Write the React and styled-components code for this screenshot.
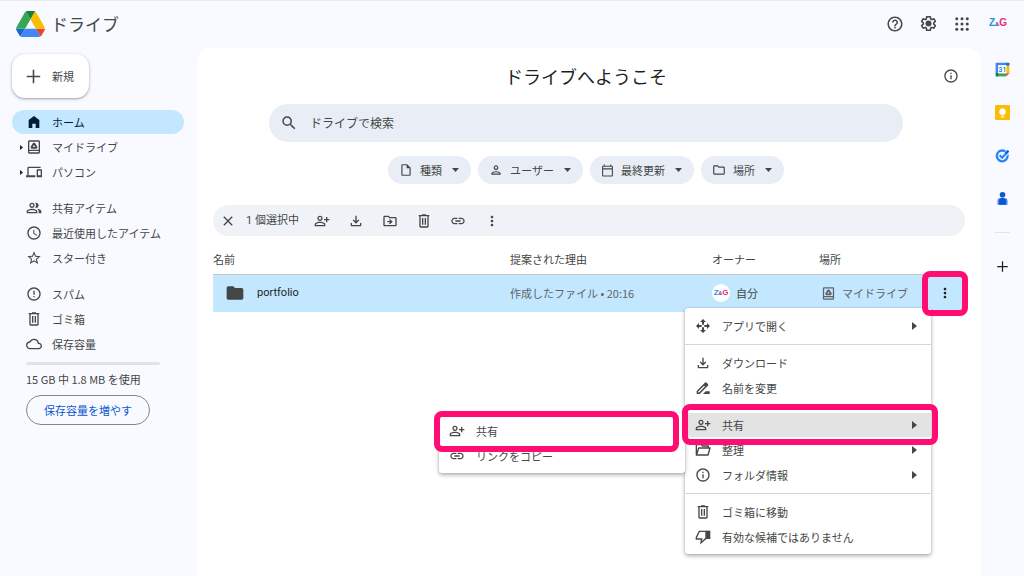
import styled, { createGlobalStyle } from "styled-components";
import {
    MdAdd,
    MdClose,
    MdErrorOutline,
    MdHelpOutline,
    MdLink,
    MdMoreVert,
    MdOutlineCalendarToday,
    MdOutlineCloud,
    MdOutlineDevices,
    MdOutlineDriveFileMove,
    MdOutlineFileDownload,
    MdOutlineFolder,
    MdOutlineInfo,
    MdOutlineInsertDriveFile,
    MdOutlinePeopleAlt,
    MdOutlinePersonAddAlt,
    MdOutlinePerson,
    MdFolder,
    MdSchedule,
    MdSearch,
    MdStarOutline,
} from "react-icons/md";

const GlobalStyle = createGlobalStyle`
    * {
        box-sizing: border-box;
    }

    body {
        margin: 0;
        background-color: #f9faff;
        color: #444746;
        font-family: "Noto Sans CJK JP", sans-serif;
        font-size: 11px;
        line-height: 16px;
    }

    button, input {
        margin: 0;
        padding: 0;
        border: none;
        background: none;
        color: inherit;
        font: inherit;
    }

    svg {
        display: block;
        flex-shrink: 0;
    }

    ul {
        margin: 0;
        padding: 0;
        list-style: none;
    }
`;

const Page = styled.div`
    display: grid;
    grid-template-columns: 197px minmax(0, 1fr) 43px;
    grid-template-rows: 47px 1fr;
    min-height: 100vh;
    border-top: 1px solid #e9ecf1;
`;

const Header = styled.header`
    grid-column: 1 / -1;
    display: flex;
    align-items: center;
    justify-content: space-between;
    padding: 0 16px 2px;
`;

const Brand = styled.a`
    display: flex;
    align-items: center;
    gap: 6px;
    color: #444746;
    font-size: 17px;
    line-height: 24px;
    text-decoration: none;
`;

const HeaderActions = styled.div`
    display: flex;
    align-items: center;
    gap: 15px;
`;

const IconButton = styled.button`
    display: flex;
    align-items: center;
    justify-content: center;
    color: ${props => props.$color || "#444746"};
`;

const ProfileButton = styled(IconButton)`
    width: 20px;
    margin-left: 2px;
`;

const Initials = styled.span`
    color: #1b96d8;
    font-family: "Liberation Sans", Arial, sans-serif;
    font-size: ${props => (props.$small ? 8 : 10)}px;
    font-weight: 700;
    line-height: 12px;

    em {
        color: #7a3f98;
        font-size: ${props => (props.$small ? 5 : 6)}px;
        font-style: normal;
    }

    strong {
        color: #ed2a7b;
    }
`;

const Sidebar = styled.aside`
    padding: 6px 13px 16px 12px;
`;

const NewButton = styled.button`
    display: flex;
    align-items: center;
    gap: 9px;
    width: 77px;
    height: 44px;
    padding-left: 12px;
    border-radius: 13px;
    background-color: white;
    box-shadow: 0 1px 2px rgba(60, 64, 67, 0.35), 0 1px 3px 1px rgba(60, 64, 67, 0.12);
`;

const Nav = styled.nav`
    display: flex;
    flex-direction: column;
    gap: 12px;
    margin-top: 12px;
`;

const NavGroup = styled.ul`
    display: flex;
    flex-direction: column;
    gap: 1px;
`;

const NavLink = styled.a`
    display: grid;
    grid-template-columns: 8px 16px 1fr;
    align-items: center;
    height: 24px;
    padding-left: 6px;
    border-radius: 12px;
    background-color: ${props => (props.$active ? "#c2e7ff" : "transparent")};
    color: ${props => (props.$active ? "#001d35" : "#444746")};
    text-decoration: none;
`;

const NavLabel = styled.span`
    padding-left: 10px;
`;

const Storage = styled.section`
    padding: 6px 24px 0 14px;
`;

const StorageBar = styled.div`
    height: 3px;
    border-radius: 2px;
    background-color: #e1e3e1;
`;

const StorageText = styled.p`
    margin: 6px 0 8px;
`;

const StorageButton = styled.button`
    height: 30px;
    padding: 0 17px;
    border: 1px solid #80868b;
    border-radius: 15px;
    color: #0b57d0;
`;

const Main = styled.main`
    padding: 16px 16px 0;
    border-radius: 14px 14px 0 0;
    background-color: white;
`;

const Hero = styled.section`
    padding-right: 6px;
`;

const TitleRow = styled.div`
    display: grid;
    grid-template-columns: 1fr auto 1fr;
    align-items: center;
`;

const Title = styled.h1`
    grid-column: 2;
    margin: 0;
    color: #1f1f1f;
    font-size: 18px;
    font-weight: 400;
    line-height: 24px;
`;

const InfoButton = styled(IconButton)`
    justify-self: end;
`;

const SearchBox = styled.label`
    display: flex;
    align-items: center;
    gap: 12px;
    width: 85%;
    height: 38px;
    margin: 16px auto 14px;
    padding: 0 11px;
    border-radius: 19px;
    background-color: #e8edf6;
`;

const SearchInput = styled.input`
    flex-grow: 1;
    font-size: 12px;
    line-height: 20px;
    outline: none;

    &::placeholder {
        color: #444746;
        opacity: 1;
    }
`;

const Chips = styled.div`
    display: flex;
    justify-content: center;
    gap: 7px;
`;

const Chip = styled.button`
    display: flex;
    align-items: center;
    gap: 7px;
    height: 28px;
    padding: 0 12px 0 11px;
    border-radius: 14px;
    background-color: #e8edf6;

    span {
        margin-right: 3px;
    }
`;

const SelectionBar = styled.div`
    display: flex;
    align-items: center;
    gap: 10px;
    height: 31px;
    margin: 21px 0 15px;
    padding-left: 7px;
    border-radius: 16px;
    background-color: #eff3f8;
`;

const SelectionCount = styled.span`
    font-family: Roboto, "Noto Sans CJK JP", sans-serif;
`;

const SelectionActions = styled.div`
    display: flex;
    gap: 18px;
    margin-left: 5px;
`;

const FileTable = styled.table`
    width: 100%;
    border-collapse: collapse;
    table-layout: fixed;
`;

const HeadCell = styled.th`
    width: ${props => props.$width || "auto"};
    height: 23px;
    padding: 0 0 7px;
    border-bottom: 1px solid #c7c7c7;
    font-weight: 400;
    text-align: left;
`;

const Cell = styled.td`
    position: relative;
    height: 37px;
    padding: 0;
    background-color: #c2e7ff;
    color: ${props => (props.$muted ? "#5f6368" : "inherit")};
`;

const CellContent = styled.div`
    display: flex;
    align-items: center;
    gap: ${props => props.$gap || 0}px;
    padding-left: ${props => props.$inset || 0}px;
`;

const FileName = styled.span`
    color: #1f1f1f;
    font-family: Roboto, "Noto Sans CJK JP", sans-serif;
    font-size: 11px;
`;

const Avatar = styled.span`
    display: flex;
    align-items: center;
    justify-content: center;
    width: 18px;
    height: 18px;
    border-radius: 50%;
    background-color: white;
`;

const RowMenuButton = styled(IconButton)`
    width: 100%;
    height: 36px;
`;

const MenuPanel = styled.div`
    position: absolute;
    z-index: ${props => (props.$nested ? 1 : 2)};
    top: ${props => (props.$nested ? "-6px" : "33px")};
    right: ${props => (props.$nested ? "100%" : "34px")};
    width: 246px;
    border-radius: 3px;
    background-color: white;
    box-shadow: 0 2px 4px rgba(0, 0, 0, 0.3), 0 0 2px rgba(0, 0, 0, 0.15);
`;

const SubmenuAnchor = styled.div`
    position: absolute;
    top: 6px;
    left: 0;
`;

const MenuGroup = styled.ul`
    display: flex;
    flex-direction: column;
    gap: 1px;
    padding: 6px 0;

    & + & {
        border-top: 1px solid #d5d6d8;
    }

    &:last-child {
        padding-bottom: 5px;
    }
`;

const MenuRow = styled.li`
    position: relative;
`;

const MenuButton = styled.button`
    display: flex;
    align-items: center;
    gap: 11px;
    width: 100%;
    height: 24px;
    padding: 0 14px 0 10px;
    background-color: ${props => (props.$active ? "#e3e3e3" : "transparent")};
    text-align: left;

    span {
        flex-grow: 1;
    }
`;

const Callout = styled.div`
    position: absolute;
    z-index: 3;
    inset: ${props => props.$inset};
    border: 6px solid #ff0d72;
    border-radius: 8px;
    pointer-events: none;
`;

const Rail = styled.aside`
    display: flex;
    flex-direction: column;
    align-items: center;
    gap: 26px;
    padding-top: 14px;
`;

const RailApps = styled.div`
    display: flex;
    flex-direction: column;
    gap: 28px;
`;

const RailDivider = styled.hr`
    width: 15px;
    height: 1px;
    margin: 0;
    border: none;
    background-color: #e1e4e8;
`;

const Icon = ({ size = 16, children }) => (
    <svg width={size} height={size} viewBox="0 0 24 24" fill="currentColor" aria-hidden="true">
        {children}
    </svg>
);

const DriveLogo = () => (
    <svg width="29" height="26" viewBox="0 0 87.3 78" aria-hidden="true">
        <path fill="#1967d2" d="m6.6 66.85 3.85 6.65c.8 1.4 1.95 2.5 3.3 3.3L27.5 53H0c0 1.55.4 3.1 1.2 4.5z" />
        <path fill="#34a853" d="M43.65 25 29.9 1.2c-1.35.8-2.5 1.9-3.3 3.3l-25.4 44A9.06 9.06 0 0 0 0 53h27.5z" />
        <path fill="#ea4335" d="M73.55 76.8c1.35-.8 2.5-1.9 3.3-3.3l1.6-2.75L86.1 57.5c.8-1.4 1.2-2.95 1.2-4.5H59.8l5.85 11.5z" />
        <path fill="#188038" d="M43.65 25 57.4 1.2C56.05.4 54.5 0 52.9 0H34.4c-1.6 0-3.15.45-4.5 1.2z" />
        <path fill="#4285f4" d="M59.8 53H27.5L13.75 76.8c1.35.8 2.9 1.2 4.5 1.2h50.8c1.6 0 3.15-.45 4.5-1.2z" />
        <path fill="#fbbc04" d="m73.4 26.5-12.7-22c-.8-1.4-1.95-2.5-3.3-3.3L43.65 25 59.8 53h27.45c0-1.55-.4-3.1-1.2-4.5z" />
    </svg>
);

const SettingsIcon = () => (
    <Icon size={19}>
        <path
            fill="none"
            stroke="currentColor"
            strokeWidth="2"
            strokeLinejoin="round"
            d="M18.6 12.9a7 7 0 0 0 0-1.8l2.1-1.7-1.9-3.3-2.5 1a7 7 0 0 0-1.6-.9L14.3 3.4H9.7l-.4 2.8a7 7 0 0 0-1.6.9l-2.5-1-1.9 3.3 2.1 1.7a7 7 0 0 0 0 1.8l-2.1 1.7 1.9 3.3 2.5-1a7 7 0 0 0 1.6.9l.4 2.8h4.6l.4-2.8a7 7 0 0 0 1.6-.9l2.5 1 1.9-3.3z"
        />
        <circle cx="12" cy="12" r="3.8" />
    </Icon>
);

const AppsIcon = () => (
    <Icon size={18}>
        {[5, 12, 19].map(y => [5, 12, 19].map(x => <circle key={`${x}-${y}`} cx={x} cy={y} r="2" />))}
    </Icon>
);

const PlusIcon = ({ size }) => (
    <Icon size={size}>
        <path d="M11 3.500h2V11h7.500v2H13v7.500h-2V13H3.500v-2H11z" />
    </Icon>
);

const HomeIcon = () => (
    <Icon>
        <path d="M12 3 4 9v12h5.5v-6.5h5V21H20V9z" />
    </Icon>
);

const MyDriveIcon = ({ size }) => (
    <Icon size={size}>
        <path
            fillRule="evenodd"
            d="M19 2H5a2 2 0 0 0-2 2v16c0 1.100.9 2 2 2h14a2 2 0 0 0 2-2V4a2 2 0 0 0-2-2zm0 18H5v-2h14zm0-4H5V4h14zM10.7 5.500h2.6l4 6.600-1.400 2.500H8.100L6.700 12.100zM12 8.900l-1.800 3h3.600z"
        />
    </Icon>
);

const TrashIcon = ({ size }) => (
    <Icon size={size}>
        <path fillRule="evenodd" d="M15 3V2H9v1H4v2h1v14.500C5 20.900 5.900 22 7 22h10c1.100 0 2-.9 2-2V5h1V3h-5zm2 17H7V5h10v15zM9 7.500h2v10H9zm4 0h2v10h-2z" />
    </Icon>
);

const OpenWithIcon = () => (
    <Icon>
        <path d="M12 1.500 7.500 6h3v4h3V6h3zM12 22.500 7.500 18h3v-4h3v4h3zM1.500 12 6 7.500v3h4v3H6v3zM22.500 12 18 7.500v3h-4v3h4v3z" />
    </Icon>
);

const OpenFolderIcon = () => (
    <Icon>
        <path
            fill="none"
            stroke="currentColor"
            strokeWidth="2"
            strokeLinejoin="round"
            d="M20 8.500V6h-8.500l-2-2H2v15.500h17.500l3-10.500H5.500L2.500 19"
        />
    </Icon>
);

const RenameIcon = () => (
    <Icon>
        <path d="M22 21v-4h-6l-4 4z" />
        <path
            fillRule="evenodd"
            d="M2.500 16.500 14.800 4.200a2 2 0 0 1 2.800 0l1.700 1.700a2 2 0 0 1 0 2.800L7 21H2.500zM4.700 18.800h1.400L15 9.900 13.600 8.500 4.700 17.400z"
        />
    </Icon>
);

const DislikeIcon = () => (
    <Icon>
        <path fill="none" stroke="currentColor" strokeWidth="2" d="M16.500 3.500h-10L2 12.500V15h8l-1 5.500 7.500-6.500z" />
        <path d="M16.500 2.500H23V15h-6.500z" />
    </Icon>
);

const Triangle = () => (
    <svg width="5" height="8" viewBox="0 0 5 8" fill="currentColor" aria-hidden="true">
        <path d="M0 0 5 4 0 8z" />
    </svg>
);

const NavTriangle = () => (
    <svg width="5" height="5" viewBox="0 0 5 5" fill="#1f1f1f" aria-hidden="true">
        <path d="M2 0 5 2.500 2 5z" />
    </svg>
);

const DownTriangle = () => (
    <svg width="7" height="4" viewBox="0 0 7 4" fill="currentColor" aria-hidden="true">
        <path d="M0 0h7L3.500 4z" />
    </svg>
);

const CalendarIcon = () => (
    <svg width="15" height="15" viewBox="0 0 24 24" aria-hidden="true">
        <path fill="#4285f4" d="M2 1h17v5H6v13H1V2a1 1 0 0 1 1-1z" />
        <path fill="#1967d2" d="M18 1h4a1 1 0 0 1 1 1v4h-5z" />
        <path fill="#fbbc04" d="M18 6h5v12h-5z" />
        <path fill="#34a853" d="M6 18h12v5H6z" />
        <path fill="#188038" d="M1 18h5v5H2a1 1 0 0 1-1-1z" />
        <path fill="#ea4335" d="M18 18h5l-5 5z" />
        <path fill="white" d="M5 5h13v13H5z" />
        <text x="12" y="16" fill="#1a73e8" fontFamily="Roboto, sans-serif" fontSize="11" fontWeight="500" textAnchor="middle">31</text>
    </svg>
);

const KeepIcon = () => (
    <svg width="15" height="15" viewBox="0 0 24 24" aria-hidden="true">
        <rect width="24" height="24" rx="2" fill="#fbbc04" />
        <path fill="white" d="M12 5a5.500 5.500 0 0 0-3 10v1.500h6V15a5.500 5.500 0 0 0-3-10zM9.500 18h5v1.800h-5z" />
    </svg>
);

const TasksIcon = () => (
    <svg width="15" height="15" viewBox="0 0 24 24" fill="none" aria-hidden="true">
        <circle cx="11.500" cy="12.500" r="8.500" stroke="#2684fc" strokeWidth="4" />
        <path d="m8 11.500 4 4L21.500 5" stroke="#f9faff" strokeWidth="6" />
        <path d="m7.500 11.500 4 4L21.500 4.500" stroke="#2684fc" strokeWidth="3.500" />
        <path d="m17 9 4.500-4.500" stroke="#0066da" strokeWidth="3.500" />
    </svg>
);

const ContactsIcon = () => (
    <svg width="15" height="15" viewBox="0 0 24 24" fill="#0b57d0" aria-hidden="true">
        <circle cx="12" cy="6" r="4.500" />
        <path fill="#4285f4" d="M4 22v-6a5 5 0 0 1 5-5h6a5 5 0 0 1 5 5v6z" />
        <path d="M6.500 22v-6a5 5 0 0 1 4-5h3a5 5 0 0 1 4 5v6z" />
    </svg>
);

const UserInitials = ({ small }) => (
    <Initials $small={small}>Z<em>&amp;</em><strong>G</strong></Initials>
);

const navGroups = [
    [
        { label: "ホーム", icon: <HomeIcon />, active: true },
        { label: "マイドライブ", icon: <MyDriveIcon />, expandable: true },
        { label: "パソコン", icon: <MdOutlineDevices size={16} />, expandable: true },
    ],
    [
        { label: "共有アイテム", icon: <MdOutlinePeopleAlt size={16} /> },
        { label: "最近使用したアイテム", icon: <MdSchedule size={16} /> },
        { label: "スター付き", icon: <MdStarOutline size={16} /> },
    ],
    [
        { label: "スパム", icon: <MdErrorOutline size={16} /> },
        { label: "ゴミ箱", icon: <TrashIcon /> },
        { label: "保存容量", icon: <MdOutlineCloud size={16} /> },
    ],
];

const chips = [
    { label: "種類", icon: <MdOutlineInsertDriveFile size={14} /> },
    { label: "ユーザー", icon: <MdOutlinePerson size={14} /> },
    { label: "最終更新", icon: <MdOutlineCalendarToday size={13} /> },
    { label: "場所", icon: <MdOutlineFolder size={14} /> },
];

const selectionActions = [
    { label: "共有", icon: <MdOutlinePersonAddAlt size={16} /> },
    { label: "ダウンロード", icon: <MdOutlineFileDownload size={16} /> },
    { label: "移動", icon: <MdOutlineDriveFileMove size={16} /> },
    { label: "ゴミ箱に移動", icon: <TrashIcon /> },
    { label: "リンクをコピー", icon: <MdLink size={16} /> },
    { label: "その他の操作", icon: <MdMoreVert size={16} /> },
];

const shareMenu = [
    [
        { label: "共有", icon: <MdOutlinePersonAddAlt size={16} />, callout: "-8px 6px -9px -5px" },
        { label: "リンクをコピー", icon: <MdLink size={16} /> },
    ],
];

const fileMenu = [
    [{ label: "アプリで開く", icon: <OpenWithIcon />, expandable: true }],
    [
        { label: "ダウンロード", icon: <MdOutlineFileDownload size={16} /> },
        { label: "名前を変更", icon: <RenameIcon /> },
    ],
    [
        {
            label: "共有",
            icon: <MdOutlinePersonAddAlt size={16} />,
            expandable: true,
            active: true,
            callout: "-9px -7px -8px -3px",
            submenu: shareMenu,
        },
        { label: "整理", icon: <OpenFolderIcon />, expandable: true },
        { label: "フォルダ情報", icon: <MdOutlineInfo size={16} />, expandable: true },
    ],
    [
        { label: "ゴミ箱に移動", icon: <TrashIcon /> },
        { label: "有効な候補ではありません", icon: <DislikeIcon /> },
    ],
];

const Menu = ({ groups, nested }) => (
    <MenuPanel $nested={nested}>
        {groups.map((items, i) => (
            <MenuGroup key={i}>
                {items.map(item => (
                    <MenuRow key={item.label}>
                        <MenuButton type="button" $active={item.active}>
                            {item.icon}
                            <span>{item.label}</span>
                            {item.expandable && <Triangle />}
                        </MenuButton>
                        {item.submenu && (
                            <SubmenuAnchor>
                                <Menu groups={item.submenu} nested />
                            </SubmenuAnchor>
                        )}
                        {item.callout && <Callout $inset={item.callout} />}
                    </MenuRow>
                ))}
            </MenuGroup>
        ))}
    </MenuPanel>
);

const App = () => {
    return (
        <>
            <GlobalStyle />
            <Page>
                <Header>
                    <Brand href="#">
                        <DriveLogo />
                        ドライブ
                    </Brand>
                    <HeaderActions>
                        <IconButton type="button" aria-label="サポート"><MdHelpOutline size={18} /></IconButton>
                        <IconButton type="button" aria-label="設定"><SettingsIcon /></IconButton>
                        <IconButton type="button" aria-label="アプリ"><AppsIcon /></IconButton>
                        <ProfileButton type="button"><UserInitials /></ProfileButton>
                    </HeaderActions>
                </Header>

                <Sidebar>
                    <NewButton type="button">
                        <PlusIcon size={19} />
                        新規
                    </NewButton>
                    <Nav>
                        {navGroups.map((items, i) => (
                            <NavGroup key={i}>
                                {items.map(item => (
                                    <li key={item.label}>
                                        <NavLink href="#" $active={item.active}>
                                            {item.expandable ? <NavTriangle /> : <i />}
                                            {item.icon}
                                            <NavLabel>{item.label}</NavLabel>
                                        </NavLink>
                                    </li>
                                ))}
                            </NavGroup>
                        ))}
                    </Nav>
                    <Storage>
                        <StorageBar />
                        <StorageText>15 GB 中 1.8 MB を使用</StorageText>
                        <StorageButton type="button">保存容量を増やす</StorageButton>
                    </Storage>
                </Sidebar>

                <Main>
                    <Hero>
                        <TitleRow>
                            <Title>ドライブへようこそ</Title>
                            <InfoButton type="button" aria-label="詳細を表示"><MdOutlineInfo size={16} /></InfoButton>
                        </TitleRow>
                        <SearchBox>
                            <MdSearch size={18} />
                            <SearchInput type="text" placeholder="ドライブで検索" aria-label="ドライブで検索" />
                        </SearchBox>
                        <Chips>
                            {chips.map(chip => (
                                <Chip type="button" key={chip.label}>
                                    {chip.icon}
                                    <span>{chip.label}</span>
                                    <DownTriangle />
                                </Chip>
                            ))}
                        </Chips>
                    </Hero>

                    <SelectionBar>
                        <IconButton type="button" aria-label="選択を解除"><MdClose size={16} /></IconButton>
                        <SelectionCount>1 個選択中</SelectionCount>
                        <SelectionActions>
                            {selectionActions.map(action => (
                                <IconButton type="button" key={action.label} aria-label={action.label}>
                                    {action.icon}
                                </IconButton>
                            ))}
                        </SelectionActions>
                    </SelectionBar>

                    <FileTable>
                        <thead>
                            <tr>
                                <HeadCell>名前</HeadCell>
                                <HeadCell $width="202px">提案された理由</HeadCell>
                                <HeadCell $width="107px">オーナー</HeadCell>
                                <HeadCell $width="106px">場所</HeadCell>
                                <HeadCell $width="40px" aria-label="操作" />
                            </tr>
                        </thead>
                        <tbody>
                            <tr>
                                <Cell>
                                    <CellContent $gap={12} $inset={12}>
                                        <MdFolder size={20} />
                                        <FileName>portfolio</FileName>
                                    </CellContent>
                                </Cell>
                                <Cell $muted>作成したファイル • 20:16</Cell>
                                <Cell>
                                    <CellContent $gap={6}>
                                        <Avatar><UserInitials small /></Avatar>
                                        自分
                                    </CellContent>
                                </Cell>
                                <Cell $muted>
                                    <CellContent $gap={6} $inset={2}>
                                        <MyDriveIcon size={15} />
                                        マイドライブ
                                    </CellContent>
                                </Cell>
                                <Cell>
                                    <RowMenuButton type="button" aria-label="その他の操作" $color="#1f1f1f">
                                        <MdMoreVert size={16} />
                                    </RowMenuButton>
                                    <Callout $inset="-4px -3px" />
                                    <Menu groups={fileMenu} />
                                </Cell>
                            </tr>
                        </tbody>
                    </FileTable>
                </Main>

                <Rail>
                    <RailApps>
                        <IconButton type="button" aria-label="カレンダー"><CalendarIcon /></IconButton>
                        <IconButton type="button" aria-label="Keep"><KeepIcon /></IconButton>
                        <IconButton type="button" aria-label="ToDo リスト"><TasksIcon /></IconButton>
                        <IconButton type="button" aria-label="連絡先"><ContactsIcon /></IconButton>
                    </RailApps>
                    <RailDivider />
                    <IconButton type="button" aria-label="アドオンを取得" $color="#1f1f1f"><PlusIcon size={15} /></IconButton>
                </Rail>
            </Page>
        </>
    );
};

export default App;
